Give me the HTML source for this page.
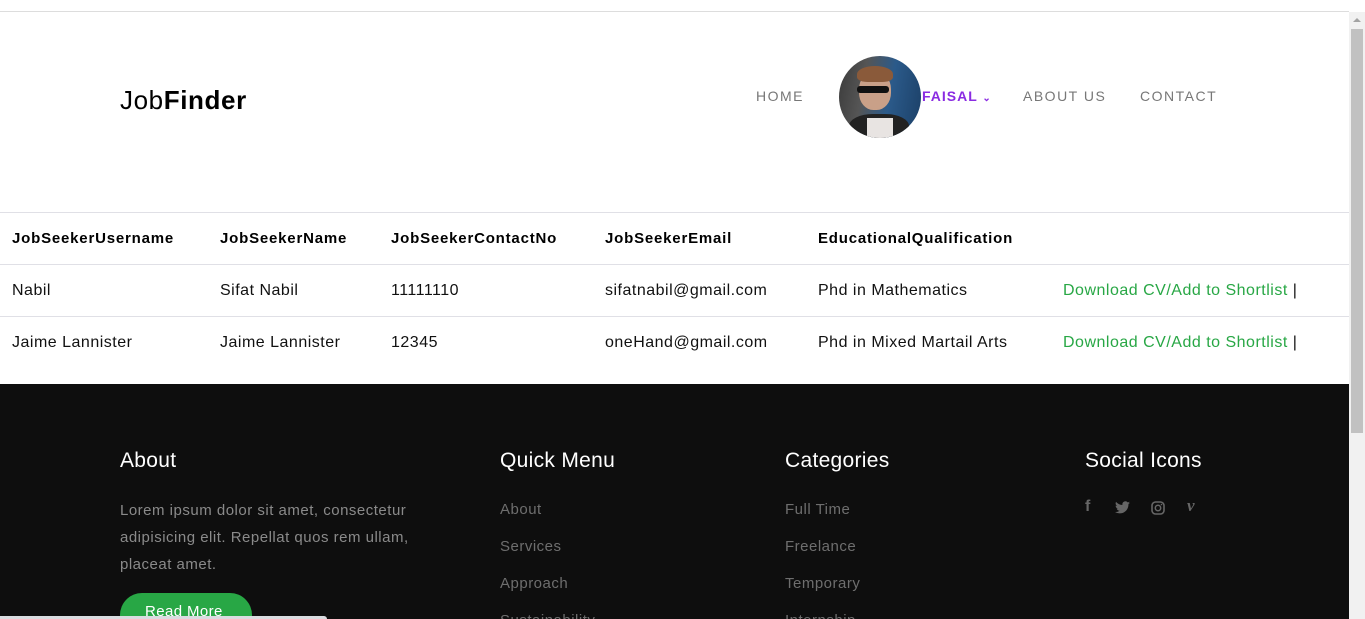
<!DOCTYPE html>
<html style="width:1365px;height:619px;overflow:hidden"><head><meta charset="utf-8"><style>
*{margin:0;padding:0;box-sizing:border-box}
body{width:1365px;height:619px;overflow:hidden;background:#fff;font-family:"Liberation Sans",sans-serif;position:relative}
.a{position:absolute;white-space:nowrap}
.nav{font-size:14px;letter-spacing:1.5px;color:#777}
.th{font-size:15px;font-weight:bold;color:#000;top:230px;letter-spacing:.8px}
.td{font-size:16px;color:#111;letter-spacing:.5px}
.g{color:#28a745}
.line{position:absolute;left:0;width:1349px;height:1px;background:#e0e0e6}
.fh{font-size:21px;color:#fff;top:449px;letter-spacing:.3px}
.fl{font-size:15px;color:#6e6e6e;letter-spacing:.5px}
</style></head><body>
<div style="position:absolute;left:0;top:11px;width:1349px;height:1px;background:#ddd"></div>
<div class="a" style="left:120px;top:85px;font-size:26px;color:#000;letter-spacing:.6px">Job<b>Finder</b></div>
<div class="a nav" style="left:756px;top:88px">HOME</div>
<div style="position:absolute;left:839px;top:56px;width:82px;height:82px;border-radius:50%;overflow:hidden;background:linear-gradient(100deg,#3a3a3a 0%,#555 30%,#2b5a8a 60%,#1b3f66 100%)">
<div style="position:absolute;left:20px;top:16px;width:32px;height:38px;border-radius:45%;background:#c9a088"></div>
<div style="position:absolute;left:18px;top:10px;width:36px;height:16px;border-radius:50% 50% 30% 30%;background:#8a5a3a"></div>
<div style="position:absolute;left:18px;top:30px;width:32px;height:7px;background:#111;border-radius:3px"></div>
<div style="position:absolute;left:10px;top:58px;width:60px;height:30px;border-radius:40% 40% 0 0;background:#222"></div>
<div style="position:absolute;left:28px;top:62px;width:26px;height:24px;background:#e8e4e2"></div>
</div>
<div class="a" style="left:922px;top:88px;font-size:14px;font-weight:bold;letter-spacing:1px;color:#8a2be2">FAISAL <span style="font-size:10px">&#8964;</span></div>
<div class="a nav" style="left:1023px;top:88px">ABOUT US</div>
<div class="a nav" style="left:1140px;top:88px">CONTACT</div>

<div class="line" style="top:212px"></div>
<div class="line" style="top:264px"></div>
<div class="line" style="top:316px"></div>
<div class="a th" style="left:12px">JobSeekerUsername</div>
<div class="a th" style="left:220px">JobSeekerName</div>
<div class="a th" style="left:391px">JobSeekerContactNo</div>
<div class="a th" style="left:605px">JobSeekerEmail</div>
<div class="a th" style="left:818px">EducationalQualification</div>
<div class="a td" style="left:12px;top:282px">Nabil</div>
<div class="a td" style="left:220px;top:282px">Sifat Nabil</div>
<div class="a td" style="left:391px;top:282px">11111110</div>
<div class="a td" style="left:605px;top:282px">sifatnabil@gmail.com</div>
<div class="a td" style="left:818px;top:282px">Phd in Mathematics</div>
<div class="a td" style="left:1063px;top:282px"><span class="g">Download CV/Add to Shortlist</span> |</div>
<div class="a td" style="left:12px;top:334px">Jaime Lannister</div>
<div class="a td" style="left:220px;top:334px">Jaime Lannister</div>
<div class="a td" style="left:391px;top:334px">12345</div>
<div class="a td" style="left:605px;top:334px">oneHand@gmail.com</div>
<div class="a td" style="left:818px;top:334px">Phd in Mixed Martail Arts</div>
<div class="a td" style="left:1063px;top:334px"><span class="g">Download CV/Add to Shortlist</span> |</div>

<div style="position:absolute;left:0;top:384px;width:1349px;height:235px;background:#0e0e0e"></div>
<div class="a fh" style="left:120px">About</div>
<div class="a fh" style="left:500px">Quick Menu</div>
<div class="a fh" style="left:785px">Categories</div>
<div class="a fh" style="left:1085px">Social Icons</div>
<div class="a fl" style="left:120px;top:497px;line-height:27px;white-space:normal;width:335px;color:#8a8a8a">Lorem ipsum dolor sit amet, consectetur adipisicing elit. Repellat quos rem ullam, placeat amet.</div>
<div class="a fl" style="left:500px;top:501px">About</div>
<div class="a fl" style="left:500px;top:538px">Services</div>
<div class="a fl" style="left:500px;top:575px">Approach</div>
<div class="a fl" style="left:500px;top:612px">Sustainability</div>
<div class="a fl" style="left:785px;top:501px">Full Time</div>
<div class="a fl" style="left:785px;top:538px">Freelance</div>
<div class="a fl" style="left:785px;top:575px">Temporary</div>
<div class="a fl" style="left:785px;top:612px">Internship</div>
<div class="a" style="left:1085px;top:498px;font-size:16px;color:#666;font-weight:bold">f</div>
<svg class="a" style="left:1115px;top:501px" width="15" height="13" viewBox="0 0 24 20"><path fill="#666" d="M24 2.4c-.9.4-1.8.7-2.8.8 1-.6 1.8-1.6 2.2-2.7-1 .6-2 1-3.1 1.2A4.9 4.9 0 0 0 11.9 6 14 14 0 0 1 1.7.9a4.9 4.9 0 0 0 1.5 6.6c-.8 0-1.600-.3-2.200-.6 0 2.400 1.700 4.400 3.900 4.800-.7.200-1.500.200-2.200.100.600 2 2.400 3.400 4.600 3.400A9.900 9.900 0 0 1 0 17.200 14 14 0 0 0 7.500 19.400c9 0 14-7.500 14-14v-.6c1-.7 1.800-1.600 2.500-2.400z"/></svg>
<svg class="a" style="left:1151px;top:501px" width="14" height="14" viewBox="0 0 14 14"><rect x="1" y="1" width="12" height="12" rx="3.5" fill="none" stroke="#666" stroke-width="1.6"/><circle cx="7" cy="7" r="2.7" fill="none" stroke="#666" stroke-width="1.5"/><circle cx="10.5" cy="3.5" r=".8" fill="#666"/></svg>
<div class="a" style="left:1187px;top:496px;font-size:17px;color:#666;font-weight:bold;font-style:italic;font-family:'Liberation Serif',serif">v</div>
<div style="position:absolute;left:120px;top:593px;width:132px;height:26px;border-radius:22px 22px 0 0;background:#28a745"></div>
<div class="a" style="left:145px;top:603px;font-size:15px;color:#fff;letter-spacing:.4px">Read More</div>
<div style="position:absolute;left:0;top:616px;width:327px;height:3px;background:#dadce0;border-radius:0 3px 0 0"></div>

<div style="position:absolute;left:1349px;top:12px;width:16px;height:607px;background:#f1f1f1"></div>
<div style="position:absolute;left:1351px;top:29px;width:12px;height:404px;background:#c1c1c1"></div>
<div style="position:absolute;left:1353px;top:18px;width:0;height:0;border-left:4px solid transparent;border-right:4px solid transparent;border-bottom:4px solid #a3a3a3"></div>
</body></html>
